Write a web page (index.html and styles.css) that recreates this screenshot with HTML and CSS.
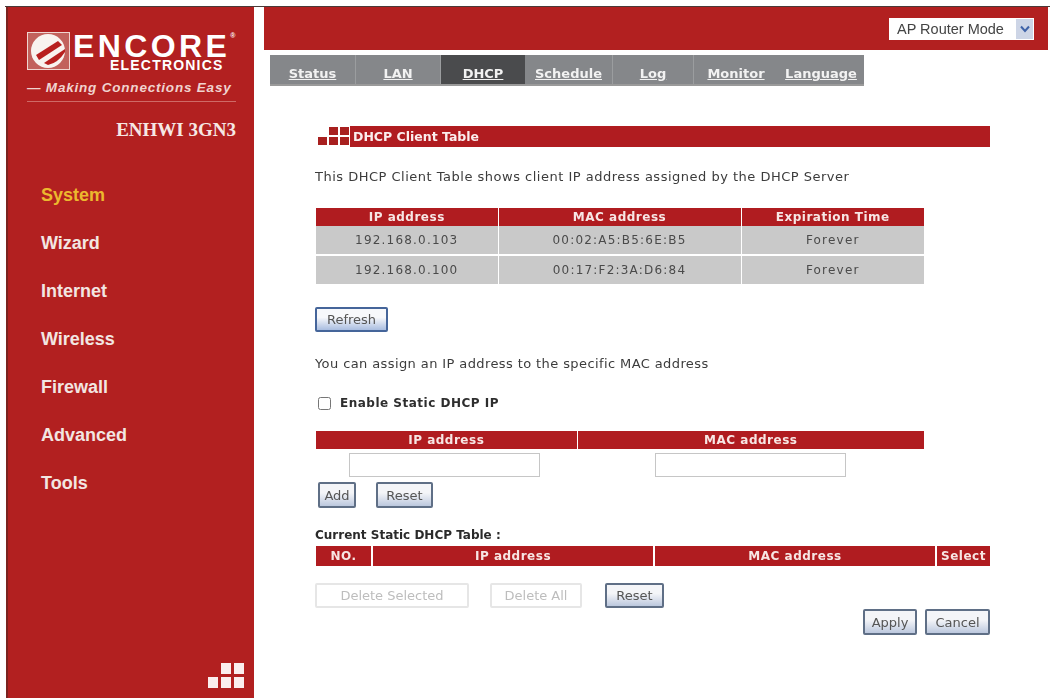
FILE: index.html
```html
<!DOCTYPE html>
<html lang="en">
<head>
    <meta charset="UTF-8">
    <meta name="viewport" content="width=device-width, initial-scale=1.0">
    <title>DHCP Client Table</title>
    <link rel="stylesheet" href="styles.css">
</head>
<body>
    <div class="page">
        <aside class="sidebar">
            <div class="logo">
                <svg class="emblem" viewBox="0 0 43 38" width="43" height="38">
                    <rect x="0.5" y="0.5" width="42" height="37" fill="#c2615c" stroke="#f0d5d0"/>
                    <circle cx="21" cy="19" r="17" fill="#f8f3ef"/>
                    <path d="M9 23 L31 9 L35 13 L12 28 Z" fill="#b8201f"/>
                    <path d="M17 31 L38 17 L38 20 Q31 31 21 33 Z" fill="#b8201f"/>
                </svg>
                <div class="logo-words">
                    <div class="logo-name">ENCORE<sup>®</sup></div>
                    <div class="logo-sub">ELECTRONICS</div>
                </div>
            </div>
            <div class="tagline">— Making Connections Easy</div>
            <div class="model">ENHWI 3GN3</div>
            <nav class="side-nav">
                <a class="side-link active" href="#">System</a>
                <a class="side-link" href="#">Wizard</a>
                <a class="side-link" href="#">Internet</a>
                <a class="side-link" href="#">Wireless</a>
                <a class="side-link" href="#">Firewall</a>
                <a class="side-link" href="#">Advanced</a>
                <a class="side-link" href="#">Tools</a>
            </nav>
            <svg class="side-dots" viewBox="0 0 37 25" width="37" height="25">
                <g fill="#fbeeee">
                    <rect x="13" y="0" width="10" height="11"/>
                    <rect x="26" y="0" width="10" height="11"/>
                    <rect x="0" y="14" width="10" height="11"/>
                    <rect x="13" y="14" width="10" height="11"/>
                    <rect x="26" y="14" width="10" height="11"/>
                </g>
            </svg>
        </aside>

        <main class="main">
            <div class="topbar">
                <div class="mode-box">
                    <span class="mode-text">AP Router Mode</span>
                    <span class="mode-arrow">
                        <svg viewBox="0 0 10 8" width="10" height="8"><path d="M1 1.5 L5 6 L9 1.5" fill="none" stroke="#3f63a8" stroke-width="2"/></svg>
                    </span>
                </div>
            </div>

            <div class="tabs">
                <a class="tab tab-status" href="#">Status</a>
                <a class="tab tab-lan" href="#">LAN</a>
                <a class="tab tab-dhcp current" href="#">DHCP</a>
                <a class="tab tab-schedule" href="#">Schedule</a>
                <a class="tab tab-log" href="#">Log</a>
                <a class="tab tab-monitor" href="#">Monitor</a>
                <a class="tab tab-language" href="#">Language</a>
            </div>

            <div class="content">
                <div class="heading">
                    <svg class="heading-dots" viewBox="0 0 32 18" width="32" height="18">
                        <g fill="#a8201f">
                            <rect x="11" y="0" width="9" height="8"/>
                            <rect x="22" y="0" width="9" height="8"/>
                            <rect x="0" y="10" width="9" height="8"/>
                            <rect x="11" y="10" width="9" height="8"/>
                            <rect x="22" y="10" width="9" height="8"/>
                        </g>
                    </svg>
                    <div class="heading-bar">DHCP Client Table</div>
                </div>

                <p class="note note-first">This DHCP Client Table shows client IP address assigned by the DHCP Server</p>

                <table class="grid grid-clients">
                    <colgroup><col class="c182"><col class="c243"><col class="c183"></colgroup>
                    <thead>
                        <tr><th>IP address</th><th>MAC address</th><th>Expiration Time</th></tr>
                    </thead>
                    <tbody>
                        <tr><td>192.168.0.103</td><td>00:02:A5:B5:6E:B5</td><td>Forever</td></tr>
                        <tr><td>192.168.0.100</td><td>00:17:F2:3A:D6:84</td><td>Forever</td></tr>
                    </tbody>
                </table>

                <button class="btn btn-refresh" type="button">Refresh</button>

                <p class="note note-assign">You can assign an IP address to the specific MAC address</p>

                <label class="enable-row">
                    <input class="enable-check" type="checkbox">
                    <span>Enable Static DHCP IP</span>
                </label>

                <table class="grid grid-static">
                    <colgroup><col class="c261"><col class="c347"></colgroup>
                    <thead>
                        <tr><th>IP address</th><th>MAC address</th></tr>
                    </thead>
                    <tbody>
                        <tr class="input-row">
                            <td class="cell-left"><input class="field" type="text"></td>
                            <td><input class="field" type="text"></td>
                        </tr>
                    </tbody>
                </table>

                <div class="add-row">
                    <button class="btn btn-add" type="button">Add</button>
                    <button class="btn btn-reset-small" type="button">Reset</button>
                </div>

                <div class="current-title">Current Static DHCP Table :</div>
                <table class="grid grid-current">
                    <colgroup><col class="c56"><col class="c282"><col class="c282"><col class="c54"></colgroup>
                    <thead>
                        <tr><th>NO.</th><th>IP address</th><th>MAC address</th><th>Select</th></tr>
                    </thead>
                </table>

                <div class="delete-row">
                    <button class="btn btn-del-selected" type="button" disabled>Delete Selected</button>
                    <button class="btn btn-del-all" type="button" disabled>Delete All</button>
                    <button class="btn btn-reset" type="button">Reset</button>
                </div>

                <div class="apply-row">
                    <button class="btn btn-apply" type="button">Apply</button>
                    <button class="btn btn-cancel" type="button">Cancel</button>
                </div>
            </div>
        </main>
    </div>
</body>
</html>
```
FILE: styles.css
```css
html, body {
    margin: 0;
    padding: 0;
    background: #fff;
}
body {
    width: 1050px;
    height: 698px;
    overflow: hidden;
    font-family: "DejaVu Sans", sans-serif;
    font-size: 12px;
    color: #333;
}
.page {
    display: flex;
    height: 691px;
    margin: 6px 0 0 5px;
    border-top: 1px solid #4a3a38;
    padding-left: 1px;
    filter: blur(0.45px);
}

/* left column */
.sidebar {
    width: 248px;
    box-sizing: border-box;
    display: flex;
    flex-direction: column;
    background: #b22020;
    border-left: 2px solid #7a2320;
    padding: 25px 18px 10px 19px;
}
.logo {
    display: flex;
    gap: 3px;
    height: 41px;
}
.emblem {
    flex: none;
}
.logo-words {
    color: #fff;
    font-family: "Liberation Sans", sans-serif;
    width: 163px;
}
.logo-name {
    height: 26px;
    font-size: 32px;
    font-weight: bold;
    line-height: 29px;
    letter-spacing: 3.4px;
    white-space: nowrap;
}
.logo-name sup {
    font-size: 7px;
    letter-spacing: 0;
    line-height: 0;
    vertical-align: 19px;
}
.logo-sub {
    margin-left: 37px;
    font-size: 14px;
    font-weight: bold;
    line-height: 14px;
    letter-spacing: 1.2px;
    white-space: nowrap;
}
.tagline {
    margin-top: 8px;
    padding-bottom: 7px;
    border-bottom: 1px solid #cf6a66;
    color: #f0d3cf;
    font-family: "Liberation Sans", sans-serif;
    font-size: 13.5px;
    font-weight: bold;
    font-style: italic;
    letter-spacing: 0.8px;
    line-height: 13px;
    white-space: nowrap;
}
.model {
    margin-top: 18px;
    text-align: right;
    color: #f6e7e4;
    font-family: "Liberation Serif", serif;
    font-size: 19px;
    font-weight: bold;
    line-height: 20px;
    white-space: nowrap;
}
.side-nav {
    display: flex;
    flex-direction: column;
    gap: 28px;
    margin-top: 45px;
    margin-left: 14px;
}
.side-link {
    color: #f2e6e2;
    font-family: "Liberation Sans", sans-serif;
    font-size: 18px;
    font-weight: bold;
    line-height: 20px;
    text-decoration: none;
}
.side-link.active {
    color: #ecb82e;
}
.side-dots {
    margin-top: auto;
    align-self: flex-end;
    margin-right: -9px;
}

/* right side */
.main {
    width: 784px;
    margin-left: 10px;
}
.topbar {
    height: 43px;
    box-sizing: border-box;
    background: #b22020;
    display: flex;
    justify-content: flex-end;
    padding: 11px 14px 0 0;
}
.mode-box {
    width: 145px;
    height: 22px;
    display: flex;
    align-items: center;
    justify-content: space-between;
    background: #fff;
    font-family: "Liberation Sans", sans-serif;
    font-size: 14.5px;
    color: #444;
    padding-left: 8px;
    box-sizing: border-box;
}
.mode-arrow {
    width: 17px;
    height: 20px;
    margin-right: 1px;
    background: #cdd5e6;
    display: flex;
    align-items: center;
    justify-content: center;
}
.tabs {
    display: flex;
    width: 594px;
    height: 31px;
    margin: 5px 0 0 6px;
    background: #85878a;
    border-bottom: 2px solid #9a9a9a;
    box-sizing: border-box;
}
.tab {
    box-sizing: border-box;
    padding-top: 12px;
    color: #f2f2f2;
    font-size: 13px;
    font-weight: bold;
    line-height: 14px;
    text-align: center;
    border-right: 1px solid #9b9d9f;
    white-space: nowrap;
}
.tab-status { width: 86px; }
.tab-lan { width: 85px; }
.tab-dhcp { width: 84px; }
.tab-schedule { width: 88px; }
.tab-log { width: 81px; }
.tab-monitor { width: 84px; border-right: 0; }
.tab-language { width: 86px; border-right: 0; }
.tab.current {
    background: #4a4b4d;
    border-right: 0;
}

.content {
    width: 675px;
    padding-left: 51px;
}
.heading {
    display: flex;
    align-items: flex-end;
    height: 21px;
    margin-top: 40px;
    padding-left: 3px;
}
.heading-dots {
    flex: none;
    margin-bottom: 2px;
}
.heading-bar {
    flex: 1;
    height: 21px;
    box-sizing: border-box;
    padding-left: 3px;
    background: #b01c20;
    color: #fbeeee;
    font-size: 12.5px;
    font-weight: bold;
    line-height: 21px;
}
.note {
    margin: 0;
    font-size: 13px;
    line-height: 16px;
    color: #3c3c3c;
    white-space: nowrap;
}
.note-first {
    margin-top: 22px;
    letter-spacing: 0.5px;
}
.note-assign {
    margin-top: 24px;
    letter-spacing: 0.4px;
}

.grid {
    table-layout: fixed;
    border-collapse: collapse;
    border-spacing: 0;
    margin-left: 1px;
}
.grid-clients, .grid-static {
    width: 608px;
}
.grid-clients {
    margin-top: 23px;
}
.grid-static {
    margin-top: 20px;
}
.grid-current {
    width: 674px;
    margin-top: 3px;
}
.c182 { width: 182px; }
.c243 { width: 243px; }
.c183 { width: 183px; }
.c261 { width: 261px; }
.c347 { width: 347px; }
.c56 { width: 56px; }
.c282 { width: 282px; }
.c54 { width: 54px; }
.grid th {
    height: 18px;
    padding: 0;
    background: #b01c20;
    color: #f7e6e4;
    font-size: 12px;
    font-weight: bold;
    letter-spacing: 0.5px;
    line-height: 18px;
    border-left: 1px solid #fff;
    white-space: nowrap;
}
.grid th:first-child {
    border-left: 0;
}
.grid-current th {
    height: 20px;
    border-left-width: 2px;
}
.grid-clients td {
    height: 28px;
    padding: 0;
    background: #c9c9c9;
    color: #4a4a4a;
    font-size: 12px;
    letter-spacing: 1.2px;
    text-align: center;
    border-left: 1px solid #fff;
    border-bottom: 2px solid #fff;
}
.grid-clients td:first-child {
    border-left: 0;
}
.grid-clients tr:last-child td {
    border-bottom: 0;
}
.input-row td {
    height: 32px;
    padding: 0;
    text-align: center;
}
.input-row .cell-left {
    padding-right: 4px;
}
.field {
    display: block;
    width: 191px;
    height: 24px;
    margin: 0 auto;
    box-sizing: border-box;
    background: #fff;
    border: 1px solid #c6c6c6;
}

.btn {
    display: block;
    height: 25px;
    box-sizing: border-box;
    padding: 0;
    background: linear-gradient(#f4f5f8 40%, #bcc8de);
    border: 2px solid #5f6f86;
    border-radius: 2px;
    color: #555;
    font-family: "DejaVu Sans", sans-serif;
    font-size: 13px;
    white-space: nowrap;
}
.btn:disabled {
    background: #fff;
    border: 2px solid #e6e6e6;
    color: #bdbdbd;
}
.btn-refresh {
    width: 73px;
    margin-top: 23px;
    border-color: #45659a;
    background: linear-gradient(#f7f8fb 40%, #a9bde0);
}
.enable-row {
    display: flex;
    align-items: center;
    height: 16px;
    margin-top: 23px;
    font-size: 12px;
    font-weight: bold;
    letter-spacing: 0.5px;
    color: #2e2e2e;
}
.enable-check {
    width: 13px;
    height: 13px;
    margin: 0 9px 0 3px;
}
.add-row {
    display: flex;
    margin-top: 1px;
    padding-left: 3px;
    gap: 20px;
}
.add-row .btn {
    height: 26px;
}
.btn-add { width: 38px; }
.btn-reset-small { width: 57px; }
.current-title {
    margin-top: 19px;
    font-size: 12px;
    font-weight: bold;
    line-height: 16px;
    color: #2a2a2a;
    white-space: nowrap;
}
.delete-row {
    display: flex;
    margin-top: 17px;
}
.btn-del-selected { width: 154px; }
.btn-del-all { width: 92px; margin-left: 21px; }
.btn-reset { width: 59px; margin-left: 23px; }
.apply-row {
    display: flex;
    justify-content: flex-end;
    gap: 8px;
    margin-top: 1px;
}
.apply-row .btn {
    height: 26px;
}
.btn-apply { width: 54px; }
.btn-cancel { width: 65px; }
```
